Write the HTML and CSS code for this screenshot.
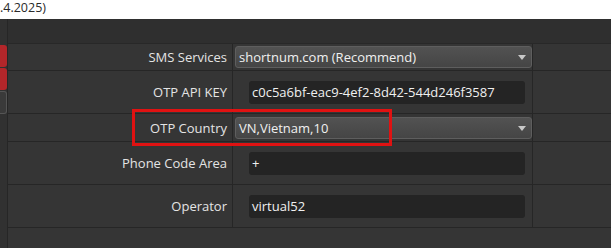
FILE: index.html
```html
<!DOCTYPE html>
<html lang="en">
<head>
    <meta charset="UTF-8">
    <title>OTP Settings</title>
    <link rel="stylesheet" href="styles.css">
</head>
<body>

    <div class="titlebar">.4.2025)</div>

    <div class="window">
        <!-- Left button strip -->
        <div class="side">
            <div class="side-btn red"></div>
            <div class="side-btn red"></div>
            <div class="side-btn gray"></div>
        </div>

        <div class="content">
            <div class="header"></div>

            <div class="grid">
                <div class="row short">
                    <div class="label">SMS Services</div>
                    <div class="value">
                        <div class="combo">shortnum.com (Recommend)<span class="arrow"></span></div>
                    </div>
                    <div class="extra"></div>
                </div>
                <div class="row">
                    <div class="label">OTP API KEY</div>
                    <div class="value">
                        <div class="input">c0c5a6bf-eac9-4ef2-8d42-544d246f3587</div>
                    </div>
                    <div class="extra"></div>
                </div>
                <div class="row short">
                    <div class="label">OTP Country</div>
                    <div class="value">
                        <div class="combo">VN,Vietnam,10<span class="arrow"></span></div>
                    </div>
                    <div class="extra"></div>
                </div>
                <div class="row">
                    <div class="label">Phone Code Area</div>
                    <div class="value">
                        <div class="input">+</div>
                    </div>
                    <div class="extra"></div>
                </div>
                <div class="row last">
                    <div class="label">Operator</div>
                    <div class="value">
                        <div class="input">virtual52</div>
                    </div>
                    <div class="extra"></div>
                </div>
            </div>
        </div>

        <!-- Red highlight drawn over the screenshot -->
        <div class="highlight"></div>
    </div>

</body>
</html>
```

FILE: styles.css
```css
body {
    margin: 0;
    padding: 0;
    font-family: "Open Sans", "Liberation Sans", Arial, sans-serif;
    background: #353535;
    overflow: hidden;
}

.titlebar {
    height: 19px;
    background: #ffffff;
    color: #2a2a2a;
    font-size: 12.5px;
    line-height: 16px;
}

.window {
    position: relative;
    display: flex;
    height: 229px;
    background: #353535;
}

.side {
    width: 7px;
    border-right: 1px solid #262626;
    background: #313131;
    padding-top: 26px;
    display: flex;
    flex-direction: column;
    gap: 1px;
}

.side-btn {
    height: 22px;
    border-radius: 0 3px 3px 0;
}

.side-btn.red {
    background: #b3262a;
}

.side-btn.gray {
    height: 21px;
    background: #3a3a3a;
    border: 1px solid #555;
    border-left: none;
}

.content {
    flex-grow: 1;
    display: flex;
    flex-direction: column;
}

.header {
    height: 24px;
    background: #2f2f2f;
    border-bottom: 1px solid #282828;
}

.row {
    display: flex;
    height: 42px;
    border-bottom: 1px solid #262626;
}

.row.short {
    height: 26px;
}

.row.short:nth-child(3) {
    height: 27px;
}

.label {
    width: 225px;
    border-right: 1px solid #262626;
    color: #e4e4e4;
    font-size: 13px;
    display: flex;
    align-items: center;
    justify-content: flex-end;
    padding-right: 5px;
    box-sizing: border-box;
}

.value {
    width: 300px;
    border-right: 1px solid #262626;
    display: flex;
    align-items: center;
    box-sizing: border-box;
}

.extra {
    flex-grow: 1;
}

.combo {
    position: relative;
    margin-left: 2px;
    width: 297px;
    height: 22px;
    box-sizing: border-box;
    background: linear-gradient(#525252, #454545);
    border: 1px solid #5e5e5e;
    border-radius: 3px;
    color: #f0f0f0;
    font-size: 13px;
    line-height: 20px;
    padding-left: 3px;
}

.arrow {
    position: absolute;
    right: 5px;
    top: 8px;
    width: 0;
    height: 0;
    border-left: 4px solid transparent;
    border-right: 4px solid transparent;
    border-top: 5px solid #c8c8c8;
}

.input {
    margin-left: 16px;
    width: 276px;
    height: 23px;
    background: #242424;
    border-radius: 3px;
    color: #f0f0f0;
    font-size: 13px;
    line-height: 23px;
    padding-left: 3px;
    box-sizing: border-box;
}

.highlight {
    position: absolute;
    left: 132px;
    top: 90px;
    width: 260px;
    height: 37px;
    border: 3px solid #e01212;
    box-sizing: border-box;
}
```
